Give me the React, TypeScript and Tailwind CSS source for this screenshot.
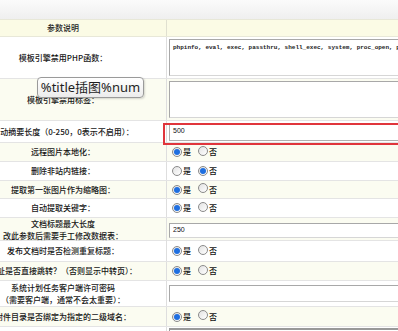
import React from "react";

const cjk = '"Noto Sans CJK SC", "Noto Sans", sans-serif';

function Radio({ checked }: { checked?: boolean }) {
  return (
    <span className="inline-flex items-center justify-center w-[10px] h-[10px] rounded-full border border-[#8a8a8a] bg-gradient-to-br from-[#e2e2e2] to-white">
      {checked && <span className="w-[6px] h-[6px] rounded-full bg-[#1f6fe0]" />}
    </span>
  );
}

function YesNo({ yes = true }: { yes?: boolean }) {
  return (
    <div className="flex items-center pl-[5px] text-[8px] font-medium text-[#111]">
      <Radio checked={yes} />
      <span className="ml-[1px]">是</span>
      <span className="ml-[7px]"><Radio checked={!yes} /></span>
      <span className="ml-[1px]">否</span>
    </div>
  );
}

function Row({
  h,
  alt,
  label,
  children,
  align = "center",
}: {
  h: string;
  alt?: boolean;
  label: React.ReactNode;
  children?: React.ReactNode;
  align?: "center" | "start";
}) {
  return (
    <div
      className={`grid grid-cols-[207px_1fr] border-b border-[#e4e4e4] ${h} ${
        alt ? "bg-[#fbfcf1]" : "bg-white"
      }`}
    >
      <div className="flex items-center justify-center border-r border-[#dedede] text-[8px] font-medium leading-[12px] text-[#151515] whitespace-nowrap text-center">
        {label}
      </div>
      <div className={`flex ${align === "center" ? "items-center" : "items-start"}`}>{children}</div>
    </div>
  );
}

export default function App() {
  return (
    <div
      className="relative w-[398px] h-[331px] overflow-hidden bg-white"
      style={{ fontFamily: cjk }}
    >
      <div className="h-[19px] bg-gradient-to-b from-[#fbfbfb] to-[#efefef]" />
      <div className="ml-[-40px] w-[540px]">
        <div className="grid grid-cols-[207px_1fr] h-[18px] bg-[#fbfbe5] border-t border-[#e8e8d8] border-b border-[#e6e6d6]">
          <div className="flex items-center justify-center border-r border-[#e0e0d0] text-[8px] font-medium text-[#222]">
            参数说明
          </div>
          <div />
        </div>
        <Row h="h-[42px]" align="start" label="模板引擎禁用PHP函数：">
          <div
            className="mt-[2px] ml-[2px] w-[320px] h-[37px] border border-[#a8a8a8] border-b-[#d6d6d6] bg-white px-[3px] pt-[4px] text-[6px] leading-[8px] font-bold text-[#222] whitespace-nowrap overflow-hidden"
            style={{ fontFamily: '"Liberation Mono", monospace' }}
          >
            phpinfo, eval, exec, passthru, shell_exec, system, proc_open, popen
          </div>
        </Row>
        <Row h="h-[42px]" alt align="start" label="模板引擎禁用标签：">
          <div className="mt-[2px] ml-[2px] w-[320px] h-[37px] border border-[#a8a8a8] border-b-[#d6d6d6] bg-white" />
        </Row>
        <Row h="h-[22px]" label="自动摘要长度（0-250，0表示不启用）：">
          <div
            className="ml-[2px] w-[320px] h-[18px] border border-[#b0b0b0] bg-white flex items-center pl-[3px] text-[7px] text-[#111]"
            style={{ fontFamily: '"Liberation Sans", sans-serif' }}
          >
            500
          </div>
        </Row>
        <Row h="h-[19px]" alt label="远程图片本地化：">
          <YesNo />
        </Row>
        <Row h="h-[19px]" label="删除非站内链接：">
          <YesNo yes={false} />
        </Row>
        <Row h="h-[18px]" alt label="提取第一张图片作为缩略图：">
          <YesNo />
        </Row>
        <Row h="h-[19px]" label="自动提取关键字：">
          <YesNo />
        </Row>
        <Row
          h="h-[23px]"
          alt
          label={
            <div className="flex flex-col items-center leading-[12px]">
              <span>文档标题最大长度</span>
              <span>改此参数后需要手工修改数据表：</span>
            </div>
          }
        >
          <div
            className="ml-[2px] w-[320px] h-[15px] border border-[#a8a8a8] border-b-[#d6d6d6] bg-white flex items-center pl-[3px] text-[7px] text-[#111]"
            style={{ fontFamily: '"Liberation Sans", sans-serif' }}
          >
            250
          </div>
        </Row>
        <Row h="h-[21px]" label="发布文档时是否检测重复标题：">
          <YesNo />
        </Row>
        <Row h="h-[19px]" alt label="网址是否直接跳转？（否则显示中转页）：">
          <YesNo />
        </Row>
        <Row
          h="h-[26px]"
          label={
            <div className="flex flex-col items-center leading-[12px]">
              <span>系统计划任务客户端许可密码</span>
              <span>（需要客户端，通常不会太重要）：</span>
            </div>
          }
        >
          <div className="ml-[2px] w-[320px] h-[17px] border border-[#a8a8a8] border-b-[#d6d6d6] bg-white" />
        </Row>
        <Row h="h-[20px]" alt label="附件目录是否绑定为指定的二级域名：">
          <YesNo />
        </Row>
        <Row h="h-[30px]" align="start" label="">
          <div className="mt-[1px] ml-[2px] w-[320px] h-[20px] border border-[#999] border-t-2 bg-white" />
        </Row>
      </div>

      {/* red highlight annotation */}
      <div className="absolute left-[163px] top-[123px] w-[260px] h-[22px] border-2 border-[#e0353c]" />

      {/* tooltip */}
      <div
        className="absolute left-[37px] top-[77px] w-[107px] h-[21px] rounded-[4px] border border-[#9a9a9a] bg-gradient-to-b from-white to-[#ececec] flex items-center justify-center text-[13px] text-[#1e1e1e] shadow-[1px_1px_2px_rgba(0,0,0,0.15)]"
        style={{ fontFamily: '"Noto Sans", "Noto Sans CJK SC", sans-serif' }}
      >
        %title插图%num
      </div>
    </div>
  );
}
